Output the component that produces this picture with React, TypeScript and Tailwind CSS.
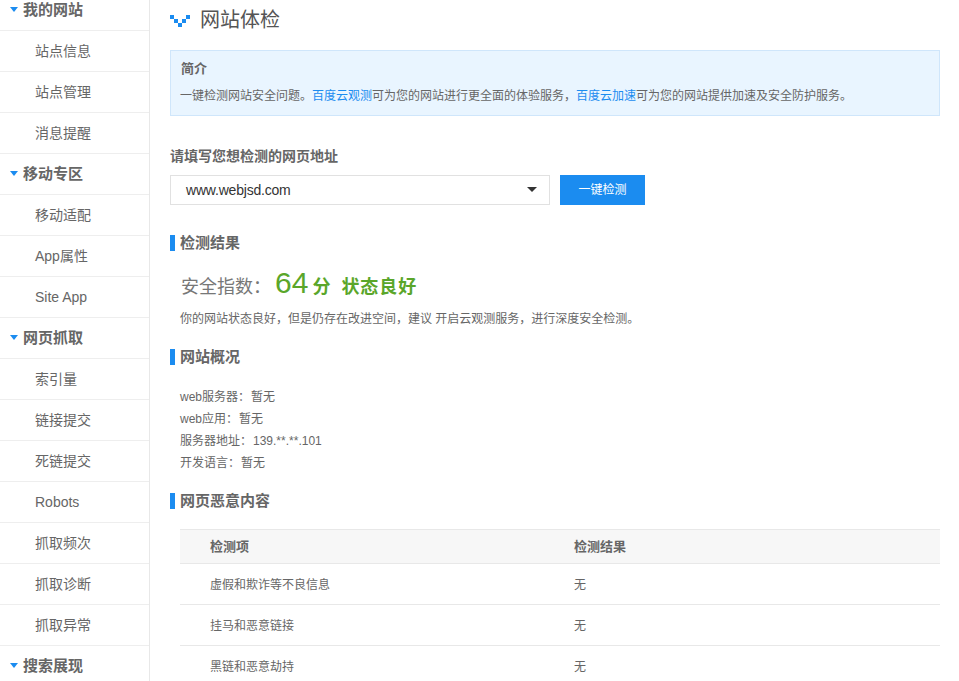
import React from "react";

const menu = [
  { title: "我的网站", items: ["站点信息", "站点管理", "消息提醒"] },
  { title: "移动专区", items: ["移动适配", "App属性", "Site App"] },
  { title: "网页抓取", items: ["索引量", "链接提交", "死链提交", "Robots", "抓取频次", "抓取诊断", "抓取异常"] },
  { title: "搜索展现", items: [] as string[] },
];

const overview = [
  ["web服务器：", "暂无"],
  ["web应用：", "暂无"],
  ["服务器地址：", "139.**.**.101"],
  ["开发语言：", "暂无"],
];

const rows = ["虚假和欺诈等不良信息", "挂马和恶意链接", "黑链和恶意劫持"];

const SectionTitle = ({ children, className }: { children: React.ReactNode; className: string }) => (
  <h2 className={`flex items-center h-[16px] border-l-[5px] border-[#1b8cf0] pl-[5px] text-[15px] font-bold text-[#666] ${className}`}>
    {children}
  </h2>
);

export default function App() {
  return (
    <div className="flex h-[681px] overflow-hidden bg-white text-[#666] font-['Liberation_Sans','Noto_Sans_CJK_SC',sans-serif]">
      {/* Sidebar */}
      <aside className="w-[150px] shrink-0 border-r border-[#e8e8e8]">
        <div className="-mt-[10px]">
          {menu.map((group) => (
            <div key={group.title}>
              <div className="relative flex h-[41px] items-center border-b border-[#eeeeee] pl-[23px] text-[15px] font-bold text-[#666]">
                <span className="absolute left-[10px] top-[17px] h-0 w-0 border-x-[4px] border-t-[5px] border-x-transparent border-t-[#1b8cf0]" />
                {group.title}
              </div>
              {group.items.map((item) => (
                <div key={item} className="flex h-[41px] items-center border-b border-[#eeeeee] pl-[35px] text-[14px] text-[#666]">
                  {item}
                </div>
              ))}
            </div>
          ))}
        </div>
      </aside>

      {/* Main */}
      <main className="flex-1 pl-[20px] pr-[19px]">
        <div className="flex h-[40px] items-start">
          <svg width="20" height="12" viewBox="0 0 20 12" className="mt-[15px]" fill="#1b8cf0">
            <rect x="0" y="0" width="4" height="4" />
            <rect x="4" y="4" width="4" height="4" />
            <rect x="8" y="8" width="4" height="4" />
            <rect x="12" y="4" width="4" height="4" />
            <rect x="16" y="0" width="4" height="4" />
          </svg>
          <h1 className="ml-[10px] self-center text-[20px] font-normal text-[#555]">网站体检</h1>
        </div>

        <div className="mt-[10px] h-[66px] border border-[#cfe6fb] bg-[#e9f5ff] pl-[9px] pr-[10px] pt-[8px]">
          <div className="pl-[1px] text-[13px] font-bold leading-[20px] text-[#666]">简介</div>
          <p className="mt-[7px] text-[12px] leading-[20px] text-[#666]">
            一键检测网站安全问题。<a className="text-[#1b8cf0]">百度云观测</a>可为您的网站进行更全面的体验服务，
            <a className="text-[#1b8cf0]">百度云加速</a>可为您的网站提供加速及安全防护服务。
          </p>
        </div>

        <div className="mt-[30px] text-[14px] font-bold leading-[20px] text-[#666]">请填写您想检测的网页地址</div>
        <div className="mt-[9px] flex h-[30px] gap-[10px]">
          <div className="relative flex w-[380px] items-center border border-[#e1e1e1] pl-[15px] text-[14px] tracking-[-0.2px] text-[#333]">
            www.webjsd.com
            <span className="absolute left-[356px] top-[11px] h-0 w-0 border-x-[5px] border-t-[5px] border-x-transparent border-t-[#333]" />
          </div>
          <button className="w-[85px] bg-[#1b8cf0] text-[12px] text-white">一键检测</button>
        </div>

        <SectionTitle className="mt-[30px]">检测结果</SectionTitle>
        <div className="mt-[9px] ml-[11px] flex h-[34px] items-baseline">
          <span className="text-[18px] text-[#777]">安全指数：</span>
          <span className="ml-[4px] text-[30px] text-[#5aa62a]">64</span>
          <span className="ml-[4px] text-[18px] font-bold text-[#5aa62a]">分</span>
          <span className="ml-[11px] text-[18px] font-bold tracking-[1px] text-[#5aa62a]">状态良好</span>
        </div>
        <p className="mt-[15px] ml-[10px] text-[12px] leading-[20px] text-[#666]">
          你的网站状态良好，但是仍存在改进空间，建议 开启云观测服务，进行深度安全检测。
        </p>

        <SectionTitle className="mt-[20px]">网站概况</SectionTitle>
        <ul className="mt-[21px] ml-[10px] text-[12px] leading-[22px] text-[#666]">
          {overview.map(([label, value]) => (
            <li key={label}>
              {label}
              <span className="ml-[1px]">{value}</span>
            </li>
          ))}
        </ul>

        <SectionTitle className="mt-[19px]">网页恶意内容</SectionTitle>
        <div className="mt-[20px] ml-[10px]">
          <div className="flex h-[35px] items-center border-y border-[#e8e8e8] bg-[#f7f7f7] text-[13px] font-bold text-[#666]">
            <div className="w-[394px] pl-[30px]">检测项</div>
            <div>检测结果</div>
          </div>
          {rows.map((row) => (
            <div key={row} className="flex h-[41px] items-center border-b border-[#e8e8e8] pt-[1px] text-[12px] text-[#666]">
              <div className="w-[394px] pl-[30px]">{row}</div>
              <div>无</div>
            </div>
          ))}
        </div>
      </main>
    </div>
  );
}
